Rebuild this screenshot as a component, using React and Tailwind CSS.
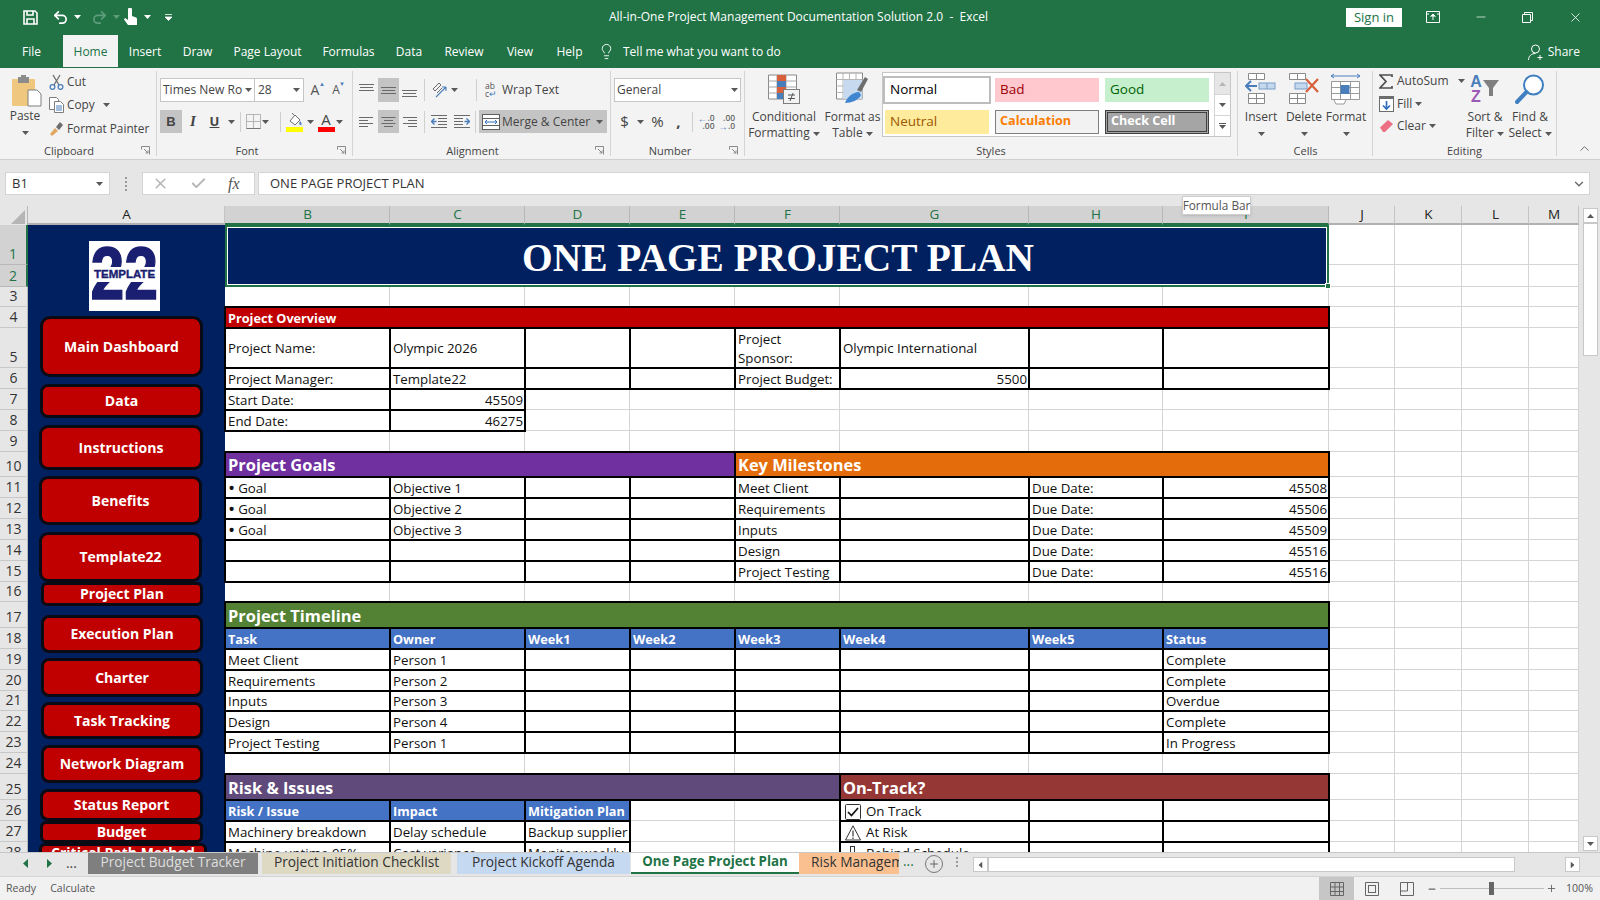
import React from 'react';
import { Undo2, Redo2, Lightbulb, Check, Plus, Minus, ChevronUp, ChevronDown, X } from 'lucide-react';

const G = '#6a6a6a';
const B = '#4a7ebb';
const Caret = ({ c = '#595959', className = '' }) => (
  <svg width="7" height="4" viewBox="0 0 7 4" className={`shrink-0 ${className}`}><path d="M0 0h7L3.5 4z" fill={c} /></svg>
);
const Launcher = () => (
  <svg width="9" height="9" viewBox="0 0 9 9"><path d="M.5.5h8v8M.5.5v3M3 3l4 4M7 4.5V7H4.5" fill="none" stroke="#8a8a8a" strokeWidth="1" /></svg>
);
const VSep = ({ className = 'h-[20px]' }) => <div className={`w-px bg-[#cfcfcf] shrink-0 ${className}`} />;

function Group({ className, label, launcher, labelClass = '', children }) {
  return (
    <div className={`shrink-0 flex ${className}`}>
      <div className="flex-1 min-w-0 flex flex-col h-[91px]">
        <div className="flex-1 flex min-h-0">{children}</div>
        <div className="h-[16px] mb-[1px] flex items-center text-[11px] text-[#444] leading-none">
          <div className={`flex-1 text-center ${labelClass}`}>{label}</div>
          {launcher && <div className="w-[18px] flex justify-start pl-[3px]"><Launcher /></div>}
        </div>
      </div>
      <div className="w-px h-[85px] mt-[3px] bg-[#d4d4d4] shrink-0" />
    </div>
  );
}

const AlignV = ({ pos }) => {
  const y = pos === 'top' ? [2, 5, 8] : pos === 'mid' ? [5, 8, 11] : [8, 11, 14];
  return <svg width="15" height="16" viewBox="0 0 15 16">{y.map((v, i) => <path key={i} d={`M${i === 1 ? 1 : 0} ${v + .5}h${i === 1 ? 13 : 15}`} stroke={G} />)}</svg>;
};
const AlignH = ({ pos }) => {
  const w = [14, 9, 14, 9];
  return <svg width="15" height="14" viewBox="0 0 15 14">{w.map((v, i) => {
    const x = pos === 'left' ? 0 : pos === 'center' ? (15 - v) / 2 : 15 - v;
    return <path key={i} d={`M${x} ${2.5 + i * 3}h${v}`} stroke={G} />;
  })}</svg>;
};

const PasteIcon = () => (
  <svg width="32" height="32" viewBox="0 0 32 32">
    <rect x="1" y="4" width="23" height="27" rx="1" fill="#f0c77e" />
    <rect x="7" y="2" width="11" height="6" fill="#8c8c8c" /><rect x="10" y="0" width="5" height="4" fill="#8c8c8c" />
    <path d="M17 15h9l4 4v12H17z" fill="#fff" stroke="#7f7f7f" />
  </svg>
);
const CutIcon = () => (
  <svg width="15" height="16" viewBox="0 0 15 16">
    <path d="M4 1l6 10M11 1L5 11" stroke="#6d6d6d" strokeWidth="1.3" fill="none" />
    <circle cx="3.5" cy="13" r="2.4" fill="none" stroke={B} strokeWidth="1.3" /><circle cx="11.5" cy="13" r="2.4" fill="none" stroke={B} strokeWidth="1.3" />
  </svg>
);
const CopyIcon = () => (
  <svg width="15" height="16" viewBox="0 0 15 16" fill="#fff" stroke="#7d7d7d">
    <path d="M.5.5h7l2 2v10h-9z" /><path d="M5.5 4.5h6l3 3v8h-9z" />
    <path d="M7 9h6M7 11h6M7 13h6" stroke="#4a7ebb" />
  </svg>
);
const PainterIcon = () => (
  <svg width="15" height="15" viewBox="0 0 15 15">
    <path d="M1 13l5-6 3 3-6 5z" fill="#e0a860" /><path d="M7 6l4-5 3 3-4 5z" fill="#6d6d6d" />
  </svg>
);
const GridSmall = () => (
  <svg width="15" height="15" viewBox="0 0 15 15" fill="none" stroke="#b5b5b5"><path d="M.5.5h14v14H.5zM7.5.5v14M.5 7.5h14" /><path d="M.5 14.5h14" stroke="#777" /></svg>
);
const FillIcon = () => (
  <svg width="17" height="20" viewBox="0 0 17 20">
    <path d="M4 9l5-6 5 5-5 5z" fill="#fff" stroke="#6d6d6d" /><path d="M6 1l3 3" stroke="#6d6d6d" />
    <path d="M14 9c2 2 2 4 .5 4S13 11 14 9z" fill={B} />
    <rect x="0" y="15" width="17" height="5" fill="#ffff00" />
  </svg>
);
const IndentIcon = ({ flip }) => (
  <svg width="16" height="15" viewBox="0 0 16 15" className={flip ? '-scale-x-100' : ''}>
    <path d="M0 1.5h16M7 4.5h9M7 7.5h9M7 10.5h9M0 13.5h16" stroke={G} />
    <path d="M5.5 7.5H1M3.5 4.5l-3 3 3 3" stroke={B} strokeWidth="1.4" fill="none" />
  </svg>
);
const MergeIcon = () => (
  <svg width="18" height="16" viewBox="0 0 18 16">
    <rect x=".5" y=".5" width="17" height="15" fill="#fff" stroke="#5f5f5f" />
    <path d="M.5 4.5h17M.5 11.5h17" stroke="#5f5f5f" />
    <path d="M3 8h12M3 8l2-2M3 8l2 2M15 8l-2-2M15 8l-2 2" stroke="#2f6fbd" fill="none" />
  </svg>
);
const OrientIcon = () => (
  <svg width="15" height="17" viewBox="0 0 15 17">
    <path d="M1 7l6-6 2 2-6 6zM5 11l5-5" fill="none" stroke={G} />
    <path d="M4 15L14 5M14 5h-4M14 5v4" fill="none" stroke={B} strokeWidth="1.1" />
  </svg>
);
const DecIcon = ({ more }) => (
  <div className="flex flex-col items-end text-[8.5px] leading-[8px] font-semibold text-[#666]">
    <div className="flex items-center">{more ? <span className="text-[#4a7ebb] text-[10px]">←</span> : null}{more ? '.0' : '.00'}</div>
    <div className="flex items-center">{more ? '.00' : <><span className="text-[#4a7ebb] text-[10px]">→</span>.0</>}</div>
  </div>
);
const CFIcon = () => (
  <svg width="32" height="30" viewBox="0 0 32 30">
    <path d="M.5 1h28v24H.5z" fill="#fff" stroke="#8a8a8a" />
    <path d="M.5 7h28M.5 13h28M.5 19h28M9 1v24M18 1v24" stroke="#a8a8a8" />
    <rect x="9" y="1" width="9" height="6" fill="#d8603a" /><rect x="9" y="7" width="9" height="6" fill="#4a7ebb" /><rect x="9" y="13" width="9" height="6" fill="#d8603a" /><rect x="9" y="19" width="9" height="6" fill="#4a7ebb" />
    <rect x="15.500" y="15.500" width="16" height="14" fill="#f3f3f3" stroke="#7d7d7d" />
    <path d="M20 21h7M20 24.500h7M22 27l3-8" stroke="#555" fill="none" />
  </svg>
);
const TableIcon = () => (
  <svg width="33" height="32" viewBox="0 0 33 32">
    <path d="M.5 1h26v26H.5z" fill="#fff" stroke="#8a8a8a" />
    <path d="M.5 7.500h26M.5 14h26M.5 20.500h26M7 1v26M13.500 1v26M20 1v26" stroke="#b5b5b5" />
    <rect x="7.500" y="8" width="19" height="19" fill="#c6d9ee" />
    <path d="M21 18l8-13 3 2-7 13z" fill="#6d6d6d" /><path d="M9 31c2-6 8-11 14-11l2 3c-2 5-10 8-16 8z" fill="#3f85cf" />
  </svg>
);
const InsertIcon = () => (
  <svg width="32" height="32" viewBox="0 0 32 32">
    <path d="M3.500.5h16v6h-16zM11.500.5v6M3.500 20.500h16v10h-16zM3.500 25.500h16M11.500 20.500v10" fill="#fff" stroke="#8a8a8a" />
    <rect x="14" y="10" width="16" height="6" fill="#c5d9ee" stroke="#7b9dc7" /><path d="M22 10v6" stroke="#7b9dc7" />
    <path d="M12 13H2M6 8l-5 5 5 5" fill="none" stroke={B} strokeWidth="2" />
  </svg>
);
const DeleteIcon = () => (
  <svg width="32" height="32" viewBox="0 0 32 32">
    <path d="M1.500.5h16v6h-16zM9.500.5v6M1.500 20.500h16v10h-16zM1.500 25.500h16M9.500 20.500v10" fill="#fff" stroke="#8a8a8a" />
    <rect x="7" y="10" width="12" height="6" fill="#c5d9ee" stroke="#7b9dc7" />
    <path d="M18 6l12 13M30 6L18 19" stroke="#d8603a" strokeWidth="2.2" />
  </svg>
);
const FormatIcon = () => (
  <svg width="32" height="32" viewBox="0 0 32 32">
    <path d="M1 3h29M1 3l3-2M1 3l3 2M30 3l-3-2M30 3l-3 2" fill="none" stroke={B} />
    <path d="M1.500 8.500h28v18h-28zM10.500 8.500v18M20.500 8.500v18M1.500 14.500h28M1.500 20.500h28" fill="#fff" stroke="#9a9a9a" />
    <path d="M4 27l2 4h8l2-4" fill="#fff" stroke="#9a9a9a" />
    <rect x="10.500" y="12" width="9" height="9" fill="#4a7ebb" />
  </svg>
);
const SigmaIcon = () => (
  <svg width="14" height="15" viewBox="0 0 14 15"><path d="M13 3V1H1l6 6.500L1 14h12v-2" fill="none" stroke="#4f4f4f" strokeWidth="1.7" /></svg>
);
const FillDown = () => (
  <svg width="15" height="16" viewBox="0 0 15 16"><rect x=".5" y=".5" width="14" height="15" fill="#fff" stroke="#6d6d6d" /><rect x="0" y="0" width="15" height="3" fill="#6d6d6d" /><path d="M7.500 5v8M4 9.500l3.500 3.500L11 9.500" fill="none" stroke="#2f6fbd" strokeWidth="1.7" /></svg>
);
const Eraser = () => (
  <svg width="15" height="14" viewBox="0 0 15 14"><path d="M1 8.500L9 1l5 4-8 8H4z" fill="#ec6f85" /></svg>
);
const SortIcon = () => (
  <div className="h-[34px] w-[32px] flex mt-[6px]">
    <div className="flex flex-col items-center leading-[15px] font-bold text-[16px] w-[14px] font-['Liberation_Sans',sans-serif]">
      <span className="text-[#4a7ebb]">A</span><span className="text-[#9b59b6]">Z</span>
    </div>
    <svg width="16" height="20" viewBox="0 0 16 20" className="mt-[5px]"><path d="M0 1h16l-6 8v8H6V9z" fill="#7f7f7f" /></svg>
  </div>
);
const FindIcon = () => (
  <svg width="30" height="30" viewBox="0 0 30 30" className="mt-[6px]"><circle cx="18.500" cy="11" r="9.500" fill="#fff" stroke="#3f7fc1" strokeWidth="2" /><path d="M11.500 18L2 28" stroke="#3f7fc1" strokeWidth="4" strokeLinecap="round" /></svg>
);

const colHeads = [['A', 0], ['B', 1], ['C', 1], ['D', 1], ['E', 1], ['F', 1], ['G', 1], ['H', 1], ['I', 1], ['J', 0], ['K', 0], ['L', 0], ['M', 0]];

const rowH = 'grid-rows-[19px_40px_22px_20px_21px_40px_21px_21px_21px_21px_25px_21px_21px_21px_21px_21px_20px_26px_21px_21px_21px_20px_21px_21px_21px_26px_21px_21px_21px]';

const OUT = 'outline-2 outline-offset-[-1px] outline-black z-[1]';
const BODY = 'text-[13.3px] text-[#111] pt-[2px]';
const box = (text = '', cls = '') => ({ text, cls: `bg-white ${OUT} ${BODY} ${cls}` });
const boxR = (t) => box(t, 'justify-end pr-[2px]');
const blank = () => ({ text: '', cls: 'bg-white border-r border-b border-[#d4d4d4]' });
const hdr = (t) => ({ text: t, cls: `bg-[#4472c4] text-white font-bold text-[12.7px] pt-[1px] ${OUT}` });
const sec = (t, cls, span) => ({ text: t, cls: `${span} ${cls} ${OUT} text-white font-bold text-[16.4px] pt-[2px]` });
const bs = (n) => Array.from({ length: n }, () => box());
const bl = (n) => Array.from({ length: n }, () => blank());
const Goal = () => <><span className="text-[19px] leading-none mr-[3px]">•</span>Goal</>;

const CheckBoxIc = () => (
  <svg width="16" height="16" viewBox="0 0 16 16" className="mr-[5px] ml-[2px] shrink-0"><rect x=".5" y=".5" width="15" height="15" rx="1" fill="#fff" stroke="#333" /><path d="M3 8l3.500 3.500L13 4" fill="none" stroke="#111" strokeWidth="1.7" /></svg>
);
const WarnIc = () => (
  <svg width="16" height="16" viewBox="0 0 16 16" className="mr-[5px] ml-[2px] shrink-0"><path d="M8 .8L15.500 15H.5z" fill="#fff" stroke="#333" /><path d="M8 5.500v6M8 12.500v1.500" stroke="#111" /></svg>
);
const BarIc = () => (
  <svg width="16" height="16" viewBox="0 0 16 16" className="mr-[5px] ml-[2px] shrink-0"><rect x="5.500" y=".5" width="4" height="14" fill="#fff" stroke="#333" /></svg>
);

const rows = [
  { cells: [{ text: 'ONE PAGE PROJECT PLAN', title: true }] },
  { cells: [] },
  { cells: bl(8) },
  { cells: [{ text: 'Project Overview', cls: `col-span-8 bg-[#c00000] text-white font-bold text-[12.7px] pt-[1px] ${OUT}` }] },
  { cells: [box('Project Name:'), box('Olympic 2026'), box(), box(), box(<span className="leading-[19px]">Project<br />Sponsor:</span>), box('Olympic International'), box(), box()] },
  { cells: [box('Project Manager:'), box('Template22'), box(), box(), box('Project Budget:'), boxR('5500'), box(), box()] },
  { cells: [box('Start Date:'), boxR('45509'), ...bl(6)] },
  { cells: [box('End Date:'), boxR('46275'), ...bl(6)] },
  { cells: bl(8) },
  { cells: [sec('Project Goals', 'bg-[#7030a0]', 'col-span-4'), sec('Key Milestones', 'bg-[#e46c0a]', 'col-span-4')] },
  { cells: [box(<Goal />), box('Objective 1'), box(), box(), box('Meet Client'), box(), box('Due Date:'), boxR('45508')] },
  { cells: [box(<Goal />), box('Objective 2'), box(), box(), box('Requirements'), box(), box('Due Date:'), boxR('45506')] },
  { cells: [box(<Goal />), box('Objective 3'), box(), box(), box('Inputs'), box(), box('Due Date:'), boxR('45509')] },
  { cells: [...bs(4), box('Design'), box(), box('Due Date:'), boxR('45516')] },
  { cells: [...bs(4), box('Project Testing'), box(), box('Due Date:'), boxR('45516')] },
  { cells: bl(8) },
  { cells: [sec('Project Timeline', 'bg-[#548235]', 'col-span-8')] },
  { cells: ['Task', 'Owner', 'Week1', 'Week2', 'Week3', 'Week4', 'Week5', 'Status'].map((t) => hdr(t)) },
  { cells: [box('Meet Client'), box('Person 1'), ...bs(5), box('Complete')] },
  { cells: [box('Requirements'), box('Person 2'), ...bs(5), box('Complete')] },
  { cells: [box('Inputs'), box('Person 3'), ...bs(5), box('Overdue')] },
  { cells: [box('Design'), box('Person 4'), ...bs(5), box('Complete')] },
  { cells: [box('Project Testing'), box('Person 1'), ...bs(5), box('In Progress')] },
  { cells: bl(8) },
  { cells: [sec('Risk & Issues', 'bg-[#604a7b]', 'col-span-5'), sec('On-Track?', 'bg-[#953735]', 'col-span-3')] },
  { cells: [hdr('Risk / Issue'), hdr('Impact'), hdr('Mitigation Plan'), ...bl(2), box(<><CheckBoxIc />On Track</>), box(), box()] },
  { cells: [box('Machinery breakdown'), box('Delay schedule'), box('Backup supplier'), ...bl(2), box(<><WarnIc />At Risk</>), box(), box()] },
  { cells: [box('Machine uptime 95%'), box('Cost variance'), box('Monitor weekly'), ...bl(2), box(<><BarIc />Behind Schedule</>), box(), box()] },
];

const navBtns = [
  ['Main Dashboard', 'mt-[5px] h-[61px] ml-[12px] w-[163px] rounded-[10px]'],
  ['Data', 'mt-[7px] h-[34px] ml-[12px] w-[163px] rounded-[8px]'],
  ['Instructions', 'mt-[7px] h-[45px] ml-[11px] w-[164px] rounded-[9px]'],
  ['Benefits', 'mt-[6px] h-[49px] ml-[11px] w-[163px] rounded-[9px]'],
  ['Template22', 'mt-[7px] h-[50px] ml-[11px] w-[163px] rounded-[9px]'],
  ['Project Plan', 'h-[24px] ml-[13px] w-[162px] rounded-[6px]'],
  ['Execution Plan', 'mt-[9px] h-[38px] ml-[13px] w-[162px] rounded-[8px]'],
  ['Charter', 'mt-[5px] h-[39px] ml-[13px] w-[162px] rounded-[8px]'],
  ['Task Tracking', 'mt-[5px] h-[37px] ml-[13px] w-[162px] rounded-[8px]'],
  ['Network Diagram', 'mt-[6px] h-[38px] ml-[13px] w-[162px] rounded-[8px]'],
  ['Status Report', 'mt-[6px] h-[32px] ml-[12px] w-[163px] rounded-[8px]'],
  ['Budget', 'h-[22px] ml-[12px] w-[163px] rounded-[6px]'],
  ['Critical Path Method', 'h-[30px] ml-[11px] w-[168px] rounded-[6px] items-start'],
];

function Sidebar() {
  return (
    <div className="col-start-2 row-[2/span_28] bg-[#002060] flex flex-col overflow-hidden h-[627px] font-['Open_Sans',sans-serif]">
      <div className="mt-[16px] ml-[61px] w-[71px] h-[70px] shrink-0 bg-white relative overflow-hidden flex justify-center">
        <span className="scale-x-[.82] text-[74px] leading-[66px] font-bold text-[#1a1f71] font-['Liberation_Sans',sans-serif] [-webkit-text-stroke:1.5px_#1a1f71]">22</span>
        <div className="absolute left-0 right-0 top-[26px] h-[15px] bg-white text-center text-[#1a1f71] font-bold text-[11.5px] leading-[15px] font-['Liberation_Sans',sans-serif] whitespace-nowrap [-webkit-text-stroke:0.4px_#1a1f71]">TEMPLATE</div>
      </div>
      {navBtns.map(([t, c]) => (
        <div key={t} className={`shrink-0 bg-[#c00000] border-[3px] border-[#0a0a14] flex items-center justify-center text-white font-bold text-[14px] leading-none whitespace-nowrap ${c}`}>{t}</div>
      ))}
    </div>
  );
}

const Sheet = () => (
  <div className={`grid grid-cols-[28px_197px_165px_135px_105px_105px_105px_189px_134px_166px_66px_67px_67px_50px] ${rowH} w-[1579px] h-[646px] overflow-hidden relative bg-white`}>
    <div className="bg-[#e6e6e6] border-r border-[#b8b8b8] flex items-end justify-end">
      <svg width="14" height="14" viewBox="0 0 14 14" className="mr-[2px] mb-[1px]"><path d="M14 0v14H0z" fill="#b5b5b5" /></svg>
    </div>
    {colHeads.map(([l, a]) => (
      <div key={l} className={`flex items-center justify-center pt-[1px] pl-[1px] text-[13.5px] leading-none border-r border-b-2 ${a ? 'bg-[#d2d2d2] text-[#217346] border-r-[#b8b8b8] border-b-[#217346]' : 'bg-[#e6e6e6] text-[#222] border-r-[#c4c4c4] border-b-[#b0b0b0]'}`}>{l}</div>
    ))}
    <Sidebar />
    {rows.map((r, i) => (
      <React.Fragment key={i}>
        <div className={`flex items-end justify-center text-[14px] leading-[20px] border-b ${i < 2 ? 'bg-[#d2d2d2] text-[#217346] border-b-[#b8b8b8] border-r-2 border-r-[#217346]' : 'bg-[#e6e6e6] text-[#333] border-b-[#c8c8c8] border-r border-r-[#b8b8b8]'}`}>{i + 1}</div>
        {r.cells.map((c, j) => c.title ? (
          <div key={j} className="col-span-8 row-span-2 bg-[#002060] relative z-[2] border-2 border-[#217346] outline outline-1 outline-offset-[-3px] outline-white flex items-center justify-center pt-[6px] pl-[2px] text-white font-bold text-[39.4px] leading-none font-['Liberation_Serif',serif]">
            {c.text}
            <div className="absolute -right-[4px] -bottom-[4px] w-[6px] h-[6px] bg-[#217346] border border-white" />
          </div>
        ) : (
          <div key={j} className={`flex items-center pl-[3px] whitespace-nowrap ${c.cls}`}>{c.text}</div>
        ))}
        {['J', 'K', 'L', 'M'].map((k) => <div key={k} className="bg-white border-r border-b border-[#d4d4d4]" />)}
      </React.Fragment>
    ))}
  </div>
);

const tabs = [
  ['File', 'w-[63px]'], ['Home', 'w-[55px]'], ['Insert', 'w-[54px]'], ['Draw', 'w-[51px]'], ['Page Layout', 'w-[89px]'],
  ['Formulas', 'w-[73px]'], ['Data', 'w-[48px]'], ['Review', 'w-[62px]'], ['View', 'w-[50px]'], ['Help', 'w-[49px]'],
];

const styleCell = 'flex items-center h-[24px] leading-none';

export default function App() {
  return (
    <div className="relative w-[1600px] h-[900px] overflow-hidden bg-[#e6e6e6] font-['Open_Sans',sans-serif] text-[12px] leading-none">
      {/* Title bar */}
      <div className="h-[34px] bg-[#217346] flex items-center text-white">
        <div className="w-[609px] flex items-center pl-[23px]">
          <svg width="15" height="15" viewBox="0 0 15 15" fill="none" stroke="#fff" strokeWidth="1.6"><path d="M1 1h11l2 2v11H1z" /><path d="M4 1v4h6V1M4 14V9h7v5" /></svg>
          <Undo2 size={17} strokeWidth={2.4} className="ml-[14px]" />
          <Caret c="#fff" className="ml-[5px]" />
          <Redo2 size={17} strokeWidth={2.4} color="#5e9d7b" className="ml-[10px]" />
          <Caret c="#5e9d7b" className="ml-[5px]" />
          <svg width="14" height="18" viewBox="0 0 14 18" className="ml-[3px]"><path d="M5 1.500a2 2 0 014 0V8l3.500 1.200c1 .4 1.500 1 1.500 2V17H5L1 11.500 2 10l3 2z" fill="#fff" /></svg>
          <Caret c="#fff" className="ml-[7px]" />
          <svg width="7" height="7" viewBox="0 0 7 7" className="ml-[14px]"><path d="M0 .5h7M0 3h7L3.500 6.500z" stroke="#fff" fill="#fff" strokeWidth=".8" /></svg>
        </div>
        <div className="w-[737px] text-[12px] whitespace-nowrap">All-in-One Project Management Documentation Solution 2.0&nbsp; -&nbsp; Excel</div>
        <div className="w-[56px] h-[19px] bg-white text-[#217346] text-[13px] flex items-center justify-center">Sign in</div>
        <svg width="14" height="12" viewBox="0 0 14 12" className="ml-[24px]" fill="none" stroke="#fff"><path d="M.5.5h13v11H.5z" /><path d="M7 9V3M4.500 5.500L7 3l2.500 2.500" fill="#fff" /><path d="M.5 3h2.500M11 3h2.500" /></svg>
        <Minus size={14} className="ml-[34px]" strokeWidth={1.2} />
        <svg width="11" height="11" viewBox="0 0 11 11" fill="none" stroke="#fff" className="ml-[34px]"><path d="M.5 2.500h8v8h-8zM2.500 2.500v-2h8v8h-2" /></svg>
        <X size={15} strokeWidth={1.3} className="ml-[35px]" />
      </div>
      {/* Tabs */}
      <div className="h-[34px] bg-[#217346] flex items-end text-white text-[12px] border-b border-[#217346]">
        {tabs.map(([t, w]) => (
          <div key={t} className={`${w} shrink-0 text-center h-[32px] pt-[1px] flex items-center justify-center ${t === 'Home' ? 'bg-[#f3f3f3] text-[#217346]' : ''}`}>{t}</div>
        ))}
        <div className="h-[32px] flex items-center ml-[4px] pt-[1px]">
          <Lightbulb size={17} strokeWidth={1.3} />
          <span className="ml-[8px] whitespace-nowrap">Tell me what you want to do</span>
        </div>
        <div className="h-[32px] flex items-center ml-auto mr-[20px] pt-[2px]">
          <svg width="17" height="17" viewBox="0 0 17 17" fill="none" stroke="#fff" className="mr-[3px]"><circle cx="7.500" cy="5" r="4" /><path d="M.5 16c0-4 3-6.500 7-6.500M12 11v5M9.500 13.500h5" /></svg>
          <span>Share</span>
        </div>
      </div>
      {/* Ribbon */}
      <div className="h-[92px] bg-[#f3f3f3] border-b border-[#d0d0d0] flex text-[#444]">
        <Group className="w-[157px]" label="Clipboard" launcher>
          <div className="w-[48px] ml-[1px] flex flex-col items-center">
            <div className="mt-[7px] ml-[4px] h-[32px]"><PasteIcon /></div>
            <div className="mt-[3px] text-[12px]">Paste</div>
            <Caret className="mt-[9px]" />
          </div>
          <div className="flex flex-col pt-[2px] text-[11.8px]">
            {[[<CutIcon key="a" />, 'Cut', false], [<CopyIcon key="b" />, 'Copy', true], [<PainterIcon key="c" />, 'Format Painter', false]].map(([ic, t, car]) => (
              <div key={t} className="h-[23.5px] flex items-center whitespace-nowrap">
                <div className="w-[18px] flex">{ic}</div>{t}{car && <Caret className="ml-[8px]" />}
              </div>
            ))}
          </div>
        </Group>

        <Group className="w-[196px] pl-[3px]" label="Font" launcher>
          <div className="flex flex-col pt-[10px] gap-[8px]">
            <div className="flex h-[24px] items-center">
              <div className="w-[95px] h-full bg-white border border-[#c6c6c6] flex items-center justify-between px-[2px] text-[12px] whitespace-nowrap overflow-hidden">Times New Ro<Caret /></div>
              <div className="w-[49px] h-full bg-white border-y border-r border-[#c6c6c6] flex items-center justify-between px-[3px] text-[12px]">28<Caret /></div>
              <div className="w-[22px] text-center text-[14px] text-[#555] relative">A<span className="absolute -top-[2px] right-[1px] text-[6px] text-[#4a7ebb]">▲</span></div>
              <div className="w-[20px] text-center text-[12px] text-[#555] relative">A<span className="absolute -top-[3px] right-[1px] text-[6px] text-[#4a7ebb]">▼</span></div>
            </div>
            <div className="flex h-[23px] items-center">
              <div className="w-[22px] h-full bg-[#c4c4c4] flex items-center justify-center font-bold font-['Liberation_Sans',sans-serif] text-[13px]">B</div>
              <div className="w-[22px] text-center italic font-['Liberation_Serif',serif] text-[15px] font-bold">I</div>
              <div className="w-[21px] text-center font-bold underline text-[13px]">U</div>
              <div className="w-[12px] flex justify-center"><Caret /></div>
              <VSep className="h-[20px] ml-[3px]" />
              <div className="w-[30px] flex items-center pl-[5px]"><GridSmall /></div>
              <div className="w-[9px] -ml-[9px] flex"><Caret /></div>
              <VSep className="h-[20px] ml-[9px]" />
              <div className="ml-[5px] w-[18px]"><FillIcon /></div>
              <Caret className="ml-[3px]" />
              <div className="ml-[3px] w-[18px] flex flex-col items-center">
                <span className="text-[15px] leading-[15px] text-[#444]">A</span>
                <div className="w-[17px] h-[5px] bg-[#ff0000]" />
              </div>
              <Caret className="ml-[1px]" />
            </div>
          </div>
        </Group>

        <Group className="w-[258px]" label="Alignment" launcher>
          <div className="flex flex-col pt-[10px] gap-[8px]">
            <div className="flex h-[24px] items-center">
              <div className="w-[25px] flex justify-center pl-[2px]"><AlignV pos="top" /></div>
              <div className="w-[21px] h-full bg-[#c4c4c4] flex items-center justify-center"><AlignV pos="mid" /></div>
              <div className="w-[21px] flex justify-center"><AlignV pos="bot" /></div>
              <VSep className="h-[22px] ml-[4px]" />
              <div className="ml-[7px] flex items-center w-[29px]"><OrientIcon /><Caret className="ml-[4px]" /></div>
              <VSep className="h-[22px] ml-[15px]" />
              <div className="ml-[8px] flex items-center whitespace-nowrap">
                <div className="text-[8.5px] leading-[8px] w-[17px] text-[#555]"><div>ab</div><div>c<span className="text-[#4a7ebb]">↵</span></div></div>
                Wrap Text
              </div>
            </div>
            <div className="flex h-[23px] items-center">
              <div className="w-[25px] flex justify-center pl-[2px]"><AlignH pos="left" /></div>
              <div className="w-[21px] h-full bg-[#c4c4c4] flex items-center justify-center"><AlignH pos="center" /></div>
              <div className="w-[21px] flex justify-center"><AlignH pos="right" /></div>
              <VSep className="h-[22px] ml-[4px]" />
              <div className="ml-[6px] w-[20px] flex"><IndentIcon /></div>
              <div className="w-[22px] flex justify-center"><IndentIcon flip /></div>
              <VSep className="h-[22px] ml-[2px]" />
              <div className="ml-[3px] w-[128px] h-full bg-[#c4c4c4] flex items-center pl-[3px] whitespace-nowrap">
                <MergeIcon /><span className="ml-[2px]">Merge &amp; Center</span><Caret className="ml-auto mr-[4px]" />
              </div>
            </div>
          </div>
        </Group>

        <Group className="w-[134px] pl-[3px]" label="Number" launcher>
          <div className="flex flex-col pt-[10px] gap-[8px]">
            <div className="w-[127px] h-[24px] bg-white border border-[#c6c6c6] flex items-center justify-between px-[2px]">General<Caret /></div>
            <div className="flex h-[23px] items-center">
              <div className="w-[21px] text-center text-[15px]">$</div>
              <Caret className="ml-[2px]" />
              <div className="w-[25px] ml-[1px] text-center text-[15px]">%</div>
              <div className="w-[17px] text-center text-[15px] font-bold">,</div>
              <VSep className="h-[20px] ml-[5px]" />
              <div className="w-[26px] flex justify-center"><DecIcon more /></div>
              <div className="w-[15px] flex justify-center"><DecIcon /></div>
            </div>
          </div>
        </Group>

        <Group className="w-[493px]" label="Styles">
          <div className="w-[78px] flex flex-col items-center pt-[6px]">
            <CFIcon />
            <div className="mt-[5px] leading-[16px] text-center whitespace-nowrap">Conditional<br />Formatting <Caret className="inline align-middle" /></div>
          </div>
          <div className="w-[59px] flex flex-col items-center pt-[4px]">
            <TableIcon />
            <div className="mt-[5px] leading-[16px] text-center whitespace-nowrap">Format as<br />Table <Caret className="inline align-middle" /></div>
          </div>
          <div className="mt-[4px] h-[65px] w-[349px] bg-white border border-[#c6c6c6] flex shrink-0">
            <div className="grid grid-cols-3 gap-x-[6px] gap-y-[5px] w-[326px] pl-[2px] pt-[5px]">
              <div className={`${styleCell} pl-[5px] text-[13.5px] bg-white text-black outline-2 outline-[#bdbdbd]`}>Normal</div>
              <div className={`${styleCell} pl-[5px] text-[13.5px] bg-[#ffc7ce] text-[#9c0006]`}>Bad</div>
              <div className={`${styleCell} pl-[5px] text-[13.5px] bg-[#c6efce] text-[#006100]`}>Good</div>
              <div className={`${styleCell} pl-[5px] text-[13.5px] bg-[#ffeb9c] text-[#9c5700]`}>Neutral</div>
              <div className={`${styleCell} pl-[4px] text-[12.6px] bg-[#f2f2f2] text-[#fa7d00] font-bold border border-[#7f7f7f]`}>Calculation</div>
              <div className={`${styleCell} pl-[3px] text-[12.6px] bg-[#a5a5a5] text-white font-bold border-[3px] border-double border-[#3f3f3f]`}>Check Cell</div>
            </div>
            <div className="ml-auto w-[16px] flex flex-col border-l border-[#d4d4d4]">
              <div className="h-[22px] bg-[#e6e6e6] flex items-center justify-center border-b border-[#d4d4d4]"><Caret c="#b5b5b5" className="rotate-180" /></div>
              <div className="h-[21px] flex items-center justify-center border-b border-[#d4d4d4]"><Caret /></div>
              <div className="flex-1 flex flex-col items-center justify-center gap-[1px]"><div className="w-[7px] h-px bg-[#595959]" /><Caret /></div>
            </div>
          </div>
        </Group>

        <Group className="w-[135px] pl-[1px]" label="Cells">
          {[['Insert', <InsertIcon key="i" />, 'w-[44px]'], ['Delete', <DeleteIcon key="d" />, 'w-[42px]'], ['Format', <FormatIcon key="f" />, 'w-[42px]']].map(([t, ic, w]) => (
            <div key={t} className={`${w} flex flex-col items-center pt-[5px]`}>
              {ic}
              <div className="mt-[6px]">{t}</div>
              <Caret className="mt-[9px]" />
            </div>
          ))}
        </Group>

        <Group className="w-[184px]" label="Editing">
          <div className="w-[89px] pl-[5px] flex flex-col pt-[2px]">
            {[[<SigmaIcon key="s" />, 'AutoSum', 'ml-[9px]'], [<FillDown key="f" />, 'Fill', 'ml-[3px]'], [<Eraser key="e" />, 'Clear', 'ml-[3px]']].map(([ic, t, m]) => (
              <div key={t} className="h-[22.5px] flex items-center whitespace-nowrap">
                <div className="w-[19px] shrink-0 flex pl-[1px]">{ic}</div>{t}<Caret className={m} />
              </div>
            ))}
          </div>
          <div className="w-[46px] flex flex-col items-center">
            <SortIcon />
            <div className="mt-[1px] leading-[16px] text-center whitespace-nowrap">Sort &amp;<br />Filter <Caret className="inline align-middle" /></div>
          </div>
          <div className="w-[44px] flex flex-col items-center">
            <FindIcon />
            <div className="mt-[5px] leading-[16px] text-center whitespace-nowrap">Find &amp;<br />Select <Caret className="inline align-middle" /></div>
          </div>
        </Group>
        <div className="flex-1 flex items-end justify-end pr-[8px] pb-[3px]"><ChevronUp size={15} strokeWidth={1.5} color="#666" /></div>
      </div>
      {/* Formula bar */}
      <div className="h-[46px] bg-[#e6e6e6] flex pt-[12px] pb-[11px] text-[13px] text-[#333]">
        <div className="ml-[5px] w-[105px] bg-white flex items-center justify-between pl-[6px] pr-[6px] border border-[#d4d4d4]">B1<Caret /></div>
        <div className="w-[32px] flex flex-col items-center justify-center gap-[2px]">
          {[0, 1, 2, 3].map((d) => <div key={d} className="w-[2px] h-[2px] bg-[#9a9a9a]" />)}
        </div>
        <div className="w-[113px] bg-white border border-[#d4d4d4] flex items-center">
          <X size={17} color="#b5b5b5" strokeWidth={2.2} className="ml-[9px]" />
          <Check size={17} color="#b5b5b5" strokeWidth={2.6} className="ml-[21px]" />
          <span className="ml-[21px] italic font-['Liberation_Serif',serif] text-[16px] text-[#555]">fx</span>
        </div>
        <div className="ml-[3px] w-[1332px] bg-white border border-[#d4d4d4] flex items-center pl-[11px] justify-between pr-[3px] text-[13px]">
          ONE PAGE PROJECT PLAN
          <ChevronDown size={14} strokeWidth={2.2} color="#666" />
        </div>
      </div>
      {/* Grid + vertical scrollbar */}
      <div className="flex h-[646px]">
        <Sheet />
        <div className="w-[21px] bg-[#e6e6e6] flex flex-col items-center pt-[2px] pl-[1px]">
          <div className="w-[15px] h-[15px] bg-white border border-[#c8c8c8] flex items-center justify-center"><Caret className="rotate-180" /></div>
          <div className="w-[15px] h-[133px] bg-white border border-[#c8c8c8]" />
          <div className="mt-auto mb-[1px] w-[15px] h-[15px] bg-white border border-[#c8c8c8] flex items-center justify-center"><Caret /></div>
        </div>
      </div>
      {/* Sheet tabs */}
      <div className="h-[24px] bg-[#e6e6e6] flex items-start whitespace-nowrap border-t border-[#c8c8c8] text-[13.7px]">
        <div className="w-[88px] h-[20px] flex items-center text-[#217346] shrink-0">
          <svg width="5" height="9" viewBox="0 0 5 9" className="ml-[23px]"><path d="M5 0v9L0 4.500z" fill="#217346" /></svg>
          <svg width="5" height="9" viewBox="0 0 5 9" className="ml-[19px]"><path d="M0 0v9l5-4.500z" fill="#217346" /></svg>
          <span className="ml-[14px] text-[#444]">...</span>
        </div>
        <div className="w-[170px] h-[21px] pb-[3px] bg-[#7f7f7f] text-[#dedede] flex items-center justify-center shrink-0">Project Budget Tracker</div>
        <div className="w-[189px] ml-[4px] h-[21px] pb-[3px] bg-[#ddd9c3] text-[#333] flex items-center justify-center shrink-0">Project Initiation Checklist</div>
        <div className="w-[173px] ml-[6px] h-[21px] pb-[3px] bg-[#c5d9f1] text-[#333] flex items-center justify-center shrink-0">Project Kickoff Agenda</div>
        <div className="w-[168px] ml-px h-[21px] pb-[2px] bg-white text-[#217346] font-bold text-[13.3px] border-b-2 border-[#217346] flex items-center justify-center shrink-0">One Page Project Plan</div>
        <div className="w-[100px] h-[21px] pb-[3px] bg-[#fac090] text-[#333] flex items-center pl-[12px] overflow-hidden shrink-0">Risk Management</div>
        <span className="ml-[4px] text-[#217346] mt-[1px] leading-none w-[20px] shrink-0">...</span>
        <div className="ml-[2px] mt-[2px] w-[18px] h-[18px] rounded-full border border-[#777] flex items-center justify-center shrink-0"><Plus size={12} color="#666" /></div>
        <div className="ml-[13px] mt-[4px] flex flex-col gap-[2px] w-[2px] shrink-0">
          {[0, 1, 2].map((d) => <div key={d} className="w-[2px] h-[2px] bg-[#9a9a9a]" />)}
        </div>
        <div className="ml-[15px] mt-[4px] flex h-[15px] shrink-0">
          <div className="w-[15px] bg-white border border-[#c8c8c8] flex items-center justify-center"><Caret className="rotate-90" /></div>
          <div className="w-[527px] bg-white border border-[#c8c8c8]" />
          <div className="w-[50px]" />
          <div className="w-[15px] bg-white border border-[#c8c8c8] flex items-center justify-center"><Caret className="-rotate-90" /></div>
        </div>
      </div>
      {/* Status bar */}
      <div className="h-[24px] bg-[#f1f1f1] flex items-center text-[10.6px] text-[#555] border-t border-[#d4d4d4]">
        <span className="ml-[6px]">Ready</span>
        <span className="ml-[14px]">Calculate</span>
        <div className="ml-auto w-[35px] h-full bg-[#c6c6c6] flex items-center justify-center">
          <svg width="14" height="14" viewBox="0 0 14 14" fill="none" stroke="#666"><path d="M.5.5h13v13H.5zM5 .5v13M9.500.5v13M.5 5h13M.5 9.500h13" /></svg>
        </div>
        <svg width="14" height="14" viewBox="0 0 14 14" fill="none" stroke="#666" className="ml-[11px]"><path d="M.5.5h13v13H.5z" /><rect x="3.500" y="3.500" width="7" height="7" /></svg>
        <svg width="14" height="14" viewBox="0 0 14 14" fill="none" stroke="#666" className="ml-[21px]"><path d="M.5.5h13v13H.5zM.5 9h7V.5" /></svg>
        <Minus size={10} strokeWidth={3} color="#666" className="ml-[13px]" />
        <div className="ml-[3px] w-[104px] h-px bg-[#bdbdbd] relative"><div className="absolute left-[49px] -top-[6px] w-[5px] h-[13px] bg-[#666]" /></div>
        <Plus size={11} strokeWidth={2} color="#666" className="ml-[2px]" />
        <span className="ml-[9px] mr-[7px] w-[27px] whitespace-nowrap">100%</span>
      </div>
      {/* Tooltip */}
      <div className="absolute left-[1182px] top-[196px] z-10 w-[69px] h-[19px] bg-white border border-[#cfcfcf] shadow-sm flex items-center justify-center text-[11.8px] text-[#555] whitespace-nowrap">Formula Bar</div>
    </div>
  );
}
